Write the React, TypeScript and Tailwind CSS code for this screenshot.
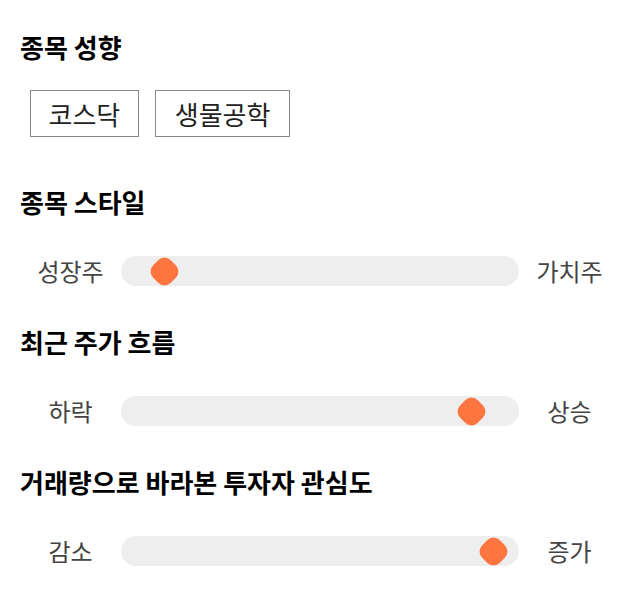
const font = { fontFamily: '"Noto Sans CJK KR", "Noto Sans", sans-serif' };

type SliderProps = {
  left: string
  right: string
  value: number
}

const Heading = ({ title, className }: { title: string; className?: string }) => (
  <h2 className={`h-[30px] leading-[30px] text-[26px] font-bold text-black ${className ?? ""}`}>{title}</h2>
);

const Slider = ({ left, right, value }: SliderProps) => {
  return (
    <div className="flex items-center h-[30px]">
      <span className="w-[101px] text-center text-[24px] leading-[30px] text-[#444]">{left}</span>
      <div className="relative w-[398px] h-[30px] rounded-full bg-[#eeeeee]">
        <div
          className="absolute top-[1px] w-[28px] h-[28px] flex items-center justify-center"
          style={{ left: `${14 + value * 3.7 - 14}px` }}
        >
          <div className="w-[25px] h-[25px] shrink-0 rotate-45 rounded-[9px] bg-[#ff7540]" />
        </div>
      </div>
      <span className="w-[101px] text-center text-[24px] leading-[30px] text-[#444]">{right}</span>
    </div>
  );
};

const App = () => {
  return (
    <div className="w-[640px] h-[606px] bg-white px-[20px] pt-[32px]" style={font}>
      <Heading title="종목 성향" />
      <div className="flex gap-[16px] ml-[10px] mt-[28px]">
        <button className="h-[47px] px-[17.5px] border border-[#888] text-[26px] leading-[30px] text-[#222]">코스닥</button>
        <button className="h-[47px] px-[19px] border border-[#888] text-[26px] leading-[30px] text-[#222]">생물공학</button>
      </div>

      <Heading title="종목 스타일" className="mt-[50px]" />
      <div className="mt-[39px]">
        <Slider left="성장주" right="가치주" value={8} />
      </div>

      <Heading title="최근 주가 흐름" className="mt-[41px]" />
      <div className="mt-[39px]">
        <Slider left="하락" right="상승" value={91} />
      </div>

      <Heading title="거래량으로 바라본 투자자 관심도" className="mt-[41px]" />
      <div className="mt-[39px]">
        <Slider left="감소" right="증가" value={97} />
      </div>
    </div>
  );
};

export default App;
